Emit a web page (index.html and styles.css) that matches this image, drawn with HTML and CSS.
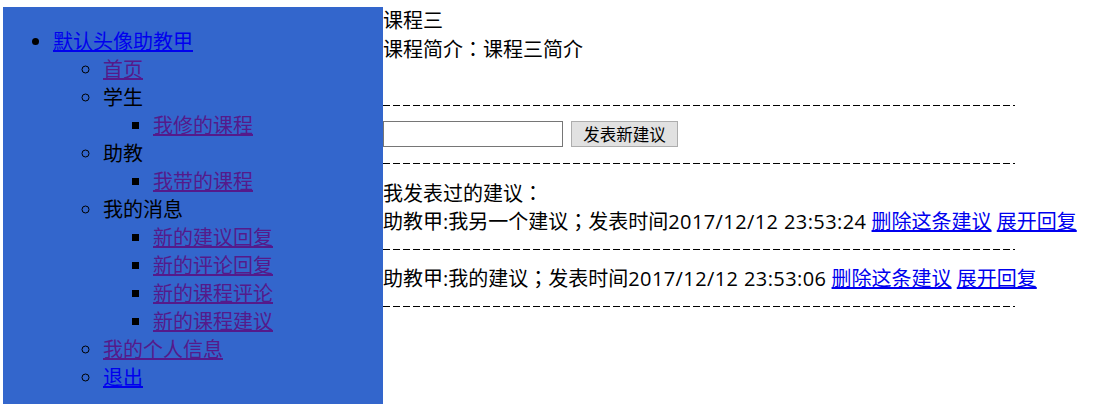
FILE: index.html
```html
<!DOCTYPE html>
<html lang="zh-CN">
<head>
<meta charset="utf-8">
<title>课程三</title>
<link rel="stylesheet" href="styles.css">
</head>
<body>
<div class="page">
  <nav class="sidebar">
    <ul class="menu">
      <li><a href="#" class="link">默认头像助教甲</a>
        <ul class="sub">
          <li><a href="#" class="visited">首页</a></li>
          <li>学生
            <ul class="subsub">
              <li><a href="#" class="visited">我修的课程</a></li>
            </ul>
          </li>
          <li>助教
            <ul class="subsub">
              <li><a href="#" class="visited">我带的课程</a></li>
            </ul>
          </li>
          <li>我的消息
            <ul class="subsub">
              <li><a href="#" class="visited">新的建议回复</a></li>
              <li><a href="#" class="visited">新的评论回复</a></li>
              <li><a href="#" class="visited">新的课程评论</a></li>
              <li><a href="#" class="visited">新的课程建议</a></li>
            </ul>
          </li>
          <li><a href="#" class="visited">我的个人信息</a></li>
          <li><a href="#" class="link">退出</a></li>
        </ul>
      </li>
    </ul>
  </nav>
  <main class="content">
    <div class="row">课程三</div>
    <div class="row">课程简介<span class="punct" lang="ja">：</span>课程三简介</div>
    <div class="row"></div>
    <div class="dash"></div>
    <form class="form-row">
      <input type="text" class="text-input">
      <button type="button" class="btn">发表新建议</button>
    </form>
    <div class="dash"></div>
    <div class="row heading">我发表过的建议<span class="punct" lang="ja">：</span></div>
    <div class="sugg">
      <div class="row">助教甲:我另一个建议<span class="punct" lang="ja">；</span>发表时间<span class="time">2017/12/12 23:53:24</span> <a href="#" class="link">删除这条建议</a> <a href="#" class="link">展开回复</a></div>
      <div class="dash"></div>
    </div>
    <div class="sugg">
      <div class="row">助教甲:我的建议<span class="punct" lang="ja">；</span>发表时间<span class="time">2017/12/12 23:53:06</span> <a href="#" class="link">删除这条建议</a> <a href="#" class="link">展开回复</a></div>
      <div class="dash"></div>
    </div>
  </main>
</div>
</body>
</html>
```

FILE: styles.css
```css
html, body {
  margin: 0;
  padding: 0;
  background: #fff;
}
body {
  font-family: "Open Sans", "Noto Sans CJK SC", sans-serif;
  font-size: 20px;
  line-height: 28px;
  color: #000;
}
.page {
  display: flex;
  align-items: flex-start;
  padding: 7px 0 0 3px;
}
.sidebar {
  width: 380px;
  min-height: 420px;
  background: #3366cc;
  flex: none;
}
.menu {
  margin: 21px 0 0 0;
  padding-left: 50px;
  list-style: disc;
}
.sub {
  margin: 0;
  padding-left: 50px;
  list-style: circle;
}
.subsub {
  margin: 0;
  padding-left: 50px;
  list-style: square;
}
.link {
  color: #0000ee;
}
.visited {
  color: #551a8b;
}
.content {
  flex: none;
  width: 720px;
}
.row {
  height: 28px;
  white-space: nowrap;
}
.punct {
  font-family: "Noto Sans CJK JP", "Noto Sans CJK TC", sans-serif;
}
.time {
  letter-spacing: 0.4px;
}
.heading {
  margin-top: 2px;
}
.dash {
  height: 28px;
  width: 632px;
  background-image: repeating-linear-gradient(to right, #000 0 7px, transparent 7px 10px);
  background-size: 632px 1px;
  background-position: 0 14px;
  background-repeat: no-repeat;
}
.form-row {
  display: flex;
  align-items: center;
  gap: 8px;
  height: 30px;
  margin: 0;
}
.text-input {
  box-sizing: border-box;
  width: 180px;
  height: 26px;
  margin: 0;
  border: 1px solid #767676;
  background: #fff;
  padding: 0 2px;
}
.btn {
  box-sizing: border-box;
  width: 107px;
  height: 26px;
  margin: 0;
  padding: 0;
  border: 1px solid #adadad;
  background: #e1e1e1;
  font-family: "Noto Sans CJK SC", sans-serif;
  font-size: 16.5px;
  line-height: 24px;
  color: #000;
}
.sugg + .sugg {
  margin-top: 1px;
}
```
